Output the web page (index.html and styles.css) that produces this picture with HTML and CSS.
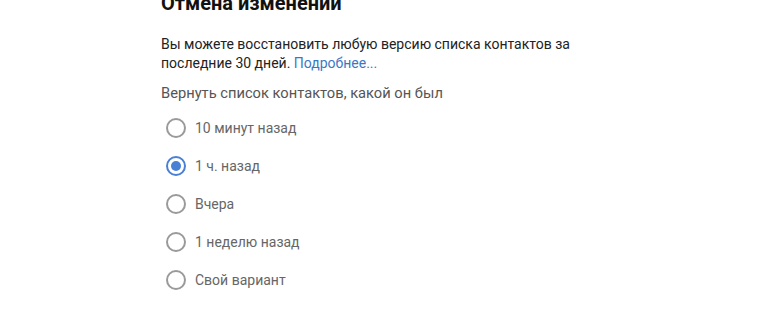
FILE: index.html
```html
<!DOCTYPE html>
<html lang="ru">
<head>
<meta charset="utf-8">
<link rel="stylesheet" href="styles.css">
</head>
<body>
<div class="dialog">
  <h1 class="title">Отмена изменений</h1>
  <p class="desc">Вы можете восстановить любую версию списка контактов за последние 30 дней. <a class="link" href="#">Подробнее...</a></p>
  <p class="prompt">Вернуть список контактов, какой он был</p>
  <ul class="options">
    <li class="option"><span class="radio"></span><span class="label">10 минут назад</span></li>
    <li class="option"><span class="radio checked"></span><span class="label">1 ч. назад</span></li>
    <li class="option"><span class="radio"></span><span class="label">Вчера</span></li>
    <li class="option"><span class="radio"></span><span class="label">1 неделю назад</span></li>
    <li class="option"><span class="radio"></span><span class="label">Свой вариант</span></li>
  </ul>
</div>
</body>
</html>
```

FILE: styles.css
```css
html, body {
  margin: 0;
  padding: 0;
  background: #ffffff;
}
body {
  font-family: Roboto, "Liberation Sans", Arial, sans-serif;
  width: 770px;
  height: 330px;
  overflow: hidden;
}
.dialog {
  padding-left: 161px;
  margin-top: -10px;
}
.title {
  margin: 0;
  font-size: 20px;
  font-weight: 700;
  color: #111;
  line-height: 26px;
}
.desc {
  margin: 19px 0 0 0;
  width: 430px;
  font-size: 14px;
  line-height: 19px;
  color: #222;
}
.link {
  color: #3b78c4;
  text-decoration: none;
}
.prompt {
  margin: 11px 0 0 0;
  font-size: 14.7px;
  line-height: 19px;
  color: #555;
}
.options {
  list-style: none;
  margin: 6px 0 0 0;
  padding: 0;
}
.option {
  display: flex;
  align-items: center;
  height: 38px;
  gap: 9px;
  font-size: 14px;
  color: #666;
}
.radio {
  box-sizing: border-box;
  width: 20px;
  height: 20px;
  margin-left: 5px;
  border: 2px solid #9a9a9a;
  border-radius: 50%;
  position: relative;
}
.radio.checked {
  border-color: #4a7fd6;
}
.radio.checked::after {
  content: "";
  position: absolute;
  left: 3px;
  top: 3px;
  width: 10px;
  height: 10px;
  border-radius: 50%;
  background: #4a7fd6;
}
```
